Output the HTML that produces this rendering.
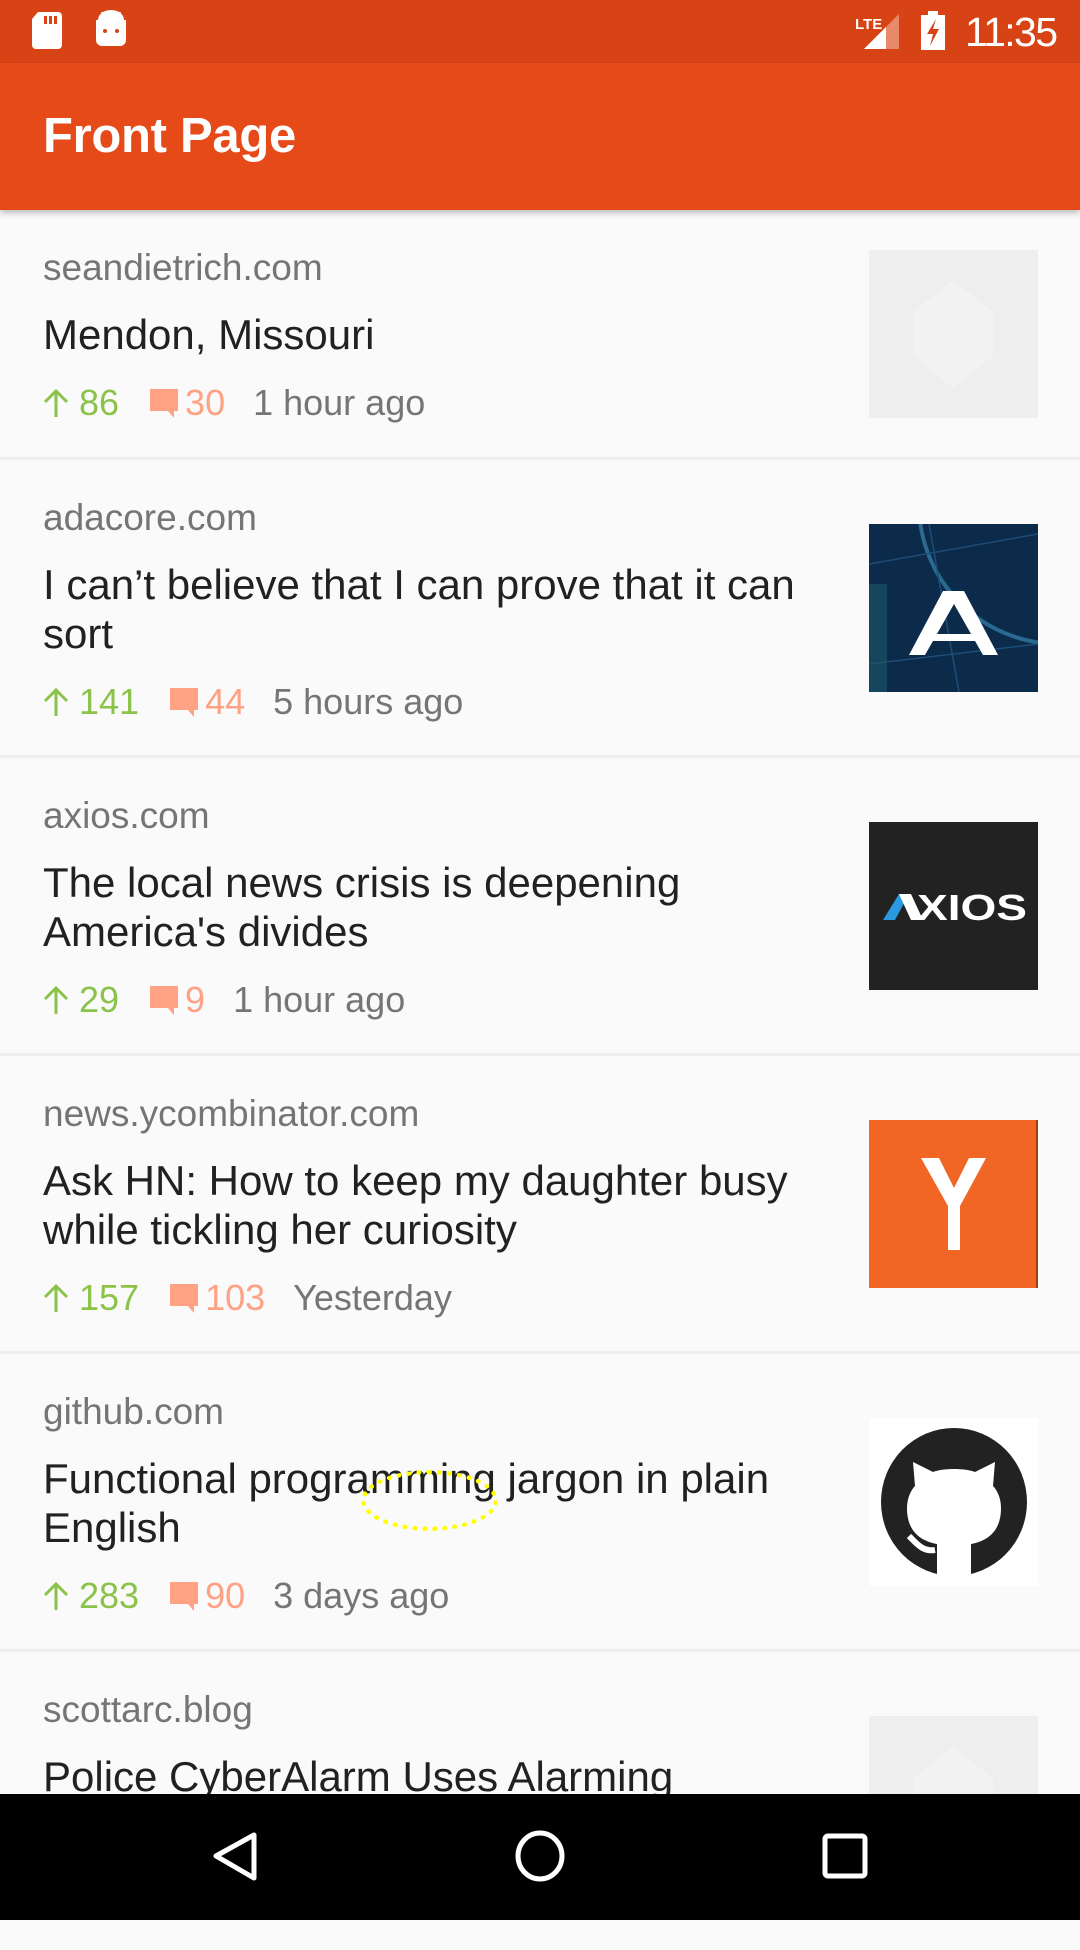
<!DOCTYPE html>
<html><head><meta charset="utf-8"><style>
*{margin:0;padding:0;box-sizing:border-box}
body{width:1080px;height:1920px;overflow:hidden;background:#fafafa;font-family:"Liberation Sans",sans-serif;position:relative}
.sb{position:absolute;top:0;left:0;width:1080px;height:63px;background:#d84315}
.ab{position:absolute;top:63px;left:0;width:1080px;height:147px;background:#e64a19;box-shadow:0 3px 6px rgba(0,0,0,.25);z-index:2}
.ab h1{position:absolute;left:43px;top:45px;font-size:49px;font-weight:bold;color:#fff;letter-spacing:-0.3px}
.item{position:absolute;left:0;width:1080px;border-bottom:3px solid #eeeeee}
.dom{position:absolute;left:43px;font-size:37px;color:#757575;line-height:44px}
.tt{position:absolute;left:43px;width:770px;font-size:42px;color:#212121;line-height:49px}
.meta{position:absolute;left:43px;font-size:36px;line-height:44px;color:#757575;white-space:nowrap;display:flex;align-items:center}
.up{color:#8bc34a;display:flex;align-items:center}.cm{color:#ffa183;margin-left:30px;display:flex;align-items:center}.tm{margin-left:28px}
.up svg{margin-right:10px}.cm svg{margin-right:6px}
.th{position:absolute;left:869px;width:169px;height:168px}
.nav{position:absolute;top:1794px;left:0;width:1080px;height:126px;background:#000;z-index:3}
</style></head><body>
<div class="sb">
<svg width="1080" height="63" style="position:absolute;left:0;top:0">
<path d="M38 12 h20 a4 4 0 0 1 4 4 v29 a4 4 0 0 1 -4 4 h-22 a4 4 0 0 1 -4 -4 v-26 z" fill="#fff"/>
<rect x="44" y="16" width="3" height="8" fill="#d84315"/><rect x="49" y="16" width="3" height="8" fill="#d84315"/><rect x="54" y="16" width="3" height="8" fill="#d84315"/>
<path d="M96 20 h30 v20 a6 6 0 0 1 -6 6 h-18 a6 6 0 0 1 -6 -6 z M98 20 a13 10 0 0 1 26 0" fill="#fff"/>
<line x1="102" y1="12" x2="104" y2="19" stroke="#fff" stroke-width="2"/><line x1="120" y1="12" x2="118" y2="19" stroke="#fff" stroke-width="2"/>
<circle cx="105" cy="31" r="2" fill="#d84315"/><circle cx="117" cy="31" r="2" fill="#d84315"/>
<path d="M864 49 L899 14 V49 Z" fill="#e88a6a"/><path d="M864 49 L886 27 V49 Z" fill="#fff"/>
<text x="855" y="29" font-size="15" font-weight="bold" fill="#fff" font-family="Liberation Sans">LTE</text>
<rect x="921" y="15" width="24" height="35" fill="#fff"/><rect x="928" y="11" width="10" height="5" fill="#fff"/>
<path d="M936 19 L927 34 H933 L930 46 L939 29 H933 Z" fill="#d84315"/>
<text x="965" y="46" font-size="41" fill="#fff" font-family="Liberation Sans" textLength="93">11:35</text>
</svg></div>
<div class="ab"><h1>Front Page</h1></div>

<div class="item" style="top:210px;height:250px">
<div class="dom" style="top:36px">seandietrich.com</div>
<div class="tt" style="top:100px">Mendon, Missouri</div>
<div class="meta" style="top:171px"><span class="up"><svg width="26" height="30" viewBox="0 0 26 30"><path d="M13 29 V3 M2 14 L13 3 L24 14" stroke="#8bc34a" stroke-width="3" fill="none"/></svg>86</span><span class="cm"><svg width="30" height="32" viewBox="0 0 30 32"><path d="M1 2 H29 V24 H25 V31 L19 24 H1 Z" fill="#ffa183"/></svg>30</span><span class="tm">1 hour ago</span></div>
<div class="th" style="top:40px;background:#eeeeee"><svg width="169" height="168"><path d="M84 30 L124 62 V106 L84 138 L44 106 V62 Z" fill="#f2f2f2"/></svg></div>
</div>

<div class="item" style="top:460px;height:298px">
<div class="dom" style="top:36px">adacore.com</div>
<div class="tt" style="top:100px">I can’t believe that I can prove that it can sort</div>
<div class="meta" style="top:220px"><span class="up"><svg width="26" height="30" viewBox="0 0 26 30"><path d="M13 29 V3 M2 14 L13 3 L24 14" stroke="#8bc34a" stroke-width="3" fill="none"/></svg>141</span><span class="cm"><svg width="30" height="32" viewBox="0 0 30 32"><path d="M1 2 H29 V24 H25 V31 L19 24 H1 Z" fill="#ffa183"/></svg>44</span><span class="tm">5 hours ago</span></div>
<div class="th" style="top:64px;background:#0c2a4a"><svg width="169" height="168"><circle cx="190" cy="-20" r="140" fill="none" stroke="#2a6a90" stroke-width="4"/><path d="M0 40 L169 10 M0 140 L169 120 M60 0 L90 168" stroke="#1e4d78" stroke-width="1.5"/><rect x="0" y="60" width="18" height="108" fill="#1e5a6a" opacity=".6"/><path d="M40 131 L74 67 H95 L129 131 H114 L85 80 L56 131 Z" fill="#fff"/><rect x="62" y="110" width="46" height="7" fill="#fff"/></svg></div>
</div>

<div class="item" style="top:758px;height:298px">
<div class="dom" style="top:36px">axios.com</div>
<div class="tt" style="top:100px">The local news crisis is deepening America's divides</div>
<div class="meta" style="top:220px"><span class="up"><svg width="26" height="30" viewBox="0 0 26 30"><path d="M13 29 V3 M2 14 L13 3 L24 14" stroke="#8bc34a" stroke-width="3" fill="none"/></svg>29</span><span class="cm"><svg width="30" height="32" viewBox="0 0 30 32"><path d="M1 2 H29 V24 H25 V31 L19 24 H1 Z" fill="#ffa183"/></svg>9</span><span class="tm">1 hour ago</span></div>
<div class="th" style="top:64px;background:#222"><svg width="169" height="168"><path d="M14 98 L30 72 H40 L26 98 Z" fill="#2a9ae0"/><path d="M30 72 H42 L54 98 H42 Z" fill="#fff"/><text x="48" y="98" font-size="36" font-weight="bold" fill="#fff" font-family="Liberation Sans" textLength="110" lengthAdjust="spacingAndGlyphs">XIOS</text></svg></div>
</div>

<div class="item" style="top:1056px;height:298px">
<div class="dom" style="top:36px">news.ycombinator.com</div>
<div class="tt" style="top:100px">Ask HN: How to keep my daughter busy while tickling her curiosity</div>
<div class="meta" style="top:220px"><span class="up"><svg width="26" height="30" viewBox="0 0 26 30"><path d="M13 29 V3 M2 14 L13 3 L24 14" stroke="#8bc34a" stroke-width="3" fill="none"/></svg>157</span><span class="cm"><svg width="30" height="32" viewBox="0 0 30 32"><path d="M1 2 H29 V24 H25 V31 L19 24 H1 Z" fill="#ffa183"/></svg>103</span><span class="tm">Yesterday</span></div>
<div class="th" style="top:64px;background:#f26625;border-right:2px solid #a04010"><svg width="169" height="168"><path d="M52 38 H70 L85 68 L100 38 H117 L91 86 V130 H79 V86 Z" fill="#fff"/></svg></div>
</div>

<div class="item" style="top:1354px;height:298px">
<div class="dom" style="top:36px">github.com</div>
<div class="tt" style="top:100px">Functional programming jargon in plain English</div>
<div class="meta" style="top:220px"><span class="up"><svg width="26" height="30" viewBox="0 0 26 30"><path d="M13 29 V3 M2 14 L13 3 L24 14" stroke="#8bc34a" stroke-width="3" fill="none"/></svg>283</span><span class="cm"><svg width="30" height="32" viewBox="0 0 30 32"><path d="M1 2 H29 V24 H25 V31 L19 24 H1 Z" fill="#ffa183"/></svg>90</span><span class="tm">3 days ago</span></div>
<div class="th" style="top:64px;background:#fff"><svg width="169" height="168"><ellipse cx="85" cy="84" rx="73" ry="74" fill="#222"/><path d="M68 158 V126 C46 122 38 108 38 90 C38 80 42 72 46 68 L44 44 L64 54 C74 50 96 50 106 54 L126 44 L124 68 C128 72 132 80 132 90 C132 108 124 122 102 126 V158 Z" fill="#fff"/><path d="M66 132 C54 134 48 126 40 118" stroke="#fff" stroke-width="6" fill="none"/></svg></div>
</div>
<div style="position:absolute;left:361px;top:1470px;width:137px;height:61px;border:5px dotted #ffff00;border-radius:50%;z-index:1"></div>

<div class="item" style="top:1652px;height:298px;border:none">
<div class="dom" style="top:36px">scottarc.blog</div>
<div class="tt" style="top:100px">Police CyberAlarm Uses Alarming</div>
<div class="th" style="top:64px;background:#eeeeee"><svg width="169" height="168"><path d="M84 30 L124 62 V106 L84 138 L44 106 V62 Z" fill="#f2f2f2"/></svg></div>
</div>

<div class="nav"><svg width="1080" height="126">
<path d="M254 41 L216 62 L254 84 Z" fill="none" stroke="#fff" stroke-width="5" stroke-linejoin="round"/>
<ellipse cx="540" cy="62" rx="22" ry="23" fill="none" stroke="#fff" stroke-width="5"/>
<rect x="825" y="42" width="40" height="40" rx="3" fill="none" stroke="#fff" stroke-width="5"/>
</svg></div>
</body></html>
